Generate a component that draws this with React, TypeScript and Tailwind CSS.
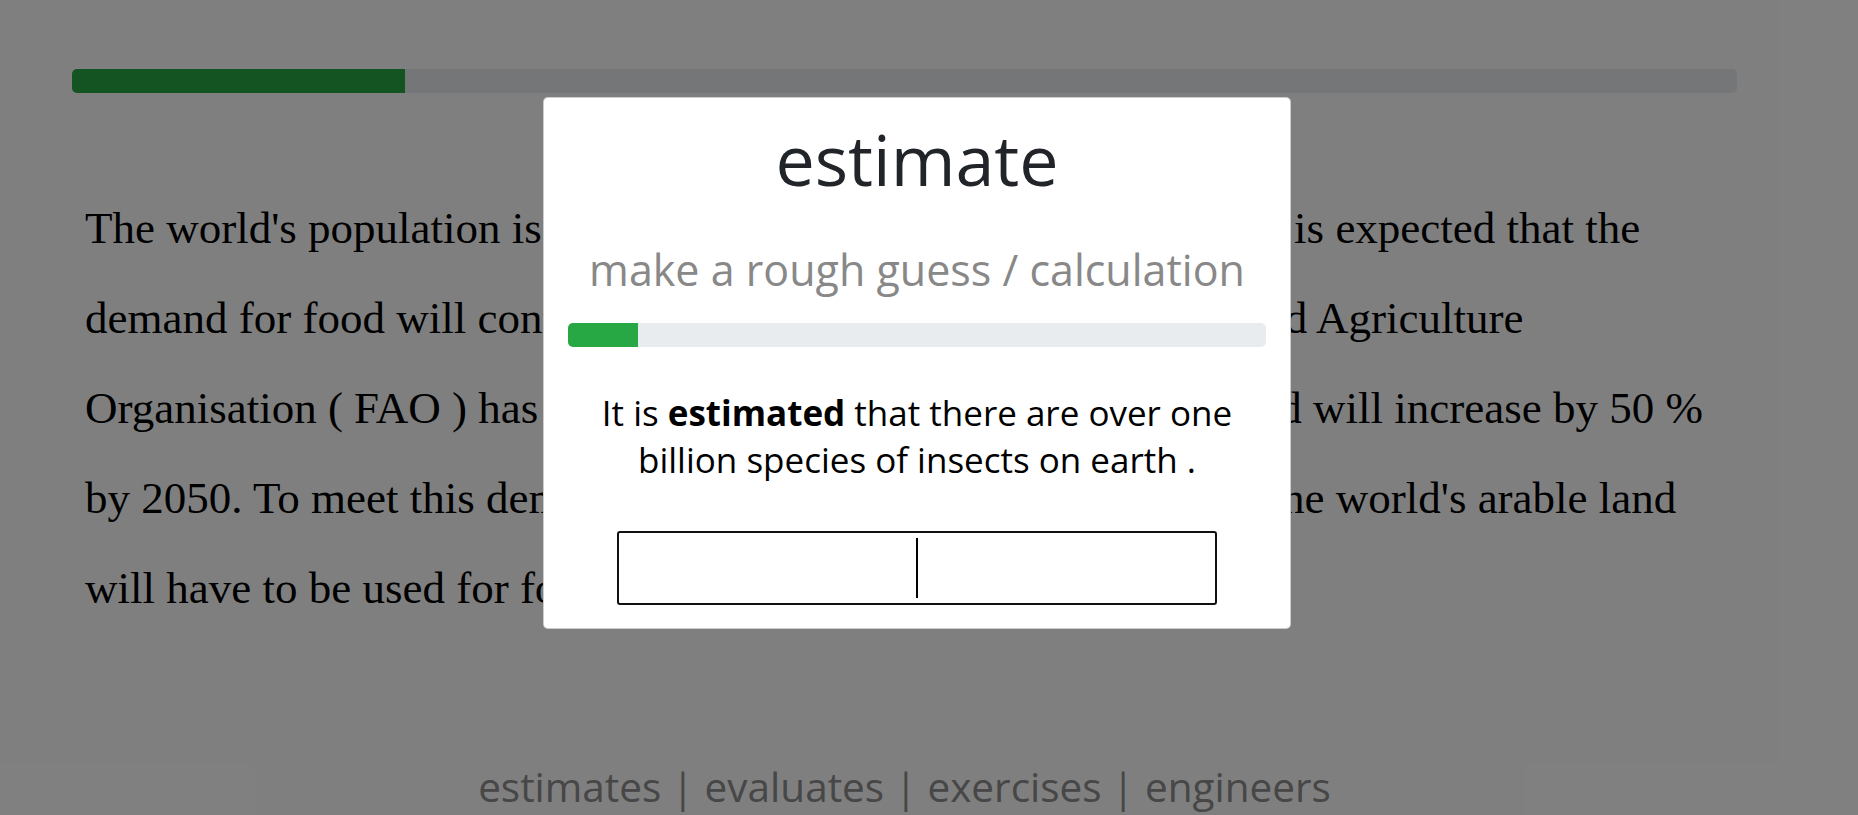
import React from 'react';

const lines = [
  "The world's population is expected to reach 9.8 billion by 2050 . It is expected that the",
  'demand for food will continue to grow exponentially. The Food and Agriculture',
  'Organisation ( FAO ) has estimated that the global demand for food will increase by 50 %',
  "by 2050. To meet this demand, it is very likely that 20 % more of the world's arable land",
  'will have to be used for food production .',
];

const ProgressBar: React.FC<{ percent: number; className?: string }> = ({ percent, className = '' }) => (
  <div className={`flex h-[24px] overflow-hidden rounded-[5px] bg-[#e9ecef] ${className}`}>
    <div className="h-full bg-[#28a745]" style={{ width: `${percent}%` }} />
  </div>
);

const WordModal: React.FC = () => (
  <div className="absolute left-[543px] top-[97px] w-[748px] rounded-[5px] border border-black/20 bg-white px-[24px] pt-[14px] pb-[23px] text-center font-['Open_Sans',sans-serif]">
    <h1 className="text-[70px] leading-[94px] text-[#212529]">estimate</h1>
    <p className="mt-[36px] text-[43px] leading-[56px] text-[#888888]">make a rough guess / calculation</p>
    <ProgressBar percent={10} className="mt-[25px]" />
    <p className="mt-[42px] text-[35px] leading-[47px] text-black">
      It is <b className="font-bold">estimated</b> that there are over one
      <br />
      billion species of insects on earth .
    </p>
    <div className="relative mx-auto mt-[48px] h-[74px] w-[600px]">
      <input
        type="text"
        aria-label="answer"
        className="h-full w-full rounded-[3px] border-2 border-[#111] bg-white text-center text-[40px] outline-none"
      />
      <span className="pointer-events-none absolute left-[299px] top-[7px] h-[60px] w-[2px] bg-black" />
    </div>
  </div>
);

export default function App() {
  return (
    <div className="relative h-[815px] w-full overflow-hidden bg-white">
      <div className="ml-[72px] w-[1665px] pt-[69px]">
        <ProgressBar percent={20} />
        <p className="mt-[90px] pl-[13px] font-['Liberation_Serif',serif] text-[45px] leading-[90px] text-black">
          {lines.map((l, i) => (
            <React.Fragment key={i}>
              {l}
              {i < lines.length - 1 && <br />}
            </React.Fragment>
          ))}
        </p>
        <p className="mt-[121px] text-center font-['Open_Sans',sans-serif] text-[40.5px] leading-[66px] text-[#8e8e8e]">
          estimates | evaluates | exercises | engineers
        </p>
      </div>

      {/* backdrop */}
      <div className="absolute inset-0 bg-black/50" />
      <WordModal />
    </div>
  );
}
